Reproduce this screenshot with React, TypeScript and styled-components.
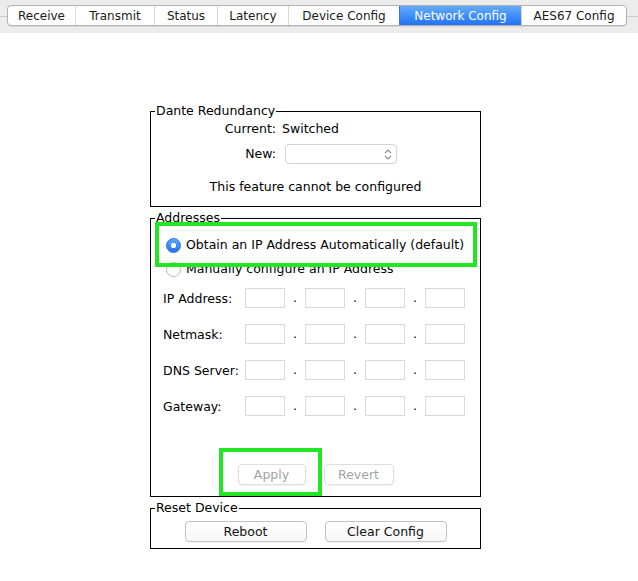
import styled, { createGlobalStyle, css } from "styled-components";

const GlobalStyle = createGlobalStyle`
  html, body {
    margin: 0;
    padding: 0;
    background: #fff;
  }
  body {
    font-family: "Lucida Grande", "DejaVu Sans", sans-serif;
    font-size: 12.5px;
    color: #000;
  }
  * {
    box-sizing: border-box;
  }
`;

const tabs = [
  { label: "Receive", width: 67 },
  { label: "Transmit", width: 79 },
  { label: "Status", width: 63 },
  { label: "Latency", width: 71 },
  { label: "Device Config", width: 111 },
  { label: "Network Config", width: 122, active: true },
  { label: "AES67 Config", width: 105 },
];

const addressRows = ["IP Address:", "Netmask:", "DNS Server:", "Gateway:"];

function App() {
  return (
    <Page>
      <GlobalStyle />
      <Header>
        <TabBar>
          {tabs.map((tab) => (
            <Tab key={tab.label} $width={tab.width} $active={tab.active}>
              {tab.label}
            </Tab>
          ))}
        </TabBar>
      </Header>

      <Main>
        <Group $top={0}>
          <Caption>Dante Redundancy</Caption>
          <StatusGrid>
            <GridLabel>Current:</GridLabel>
            <span>Switched</span>
            <GridLabel>New:</GridLabel>
            <FakeSelect>
              <svg width="8" height="13" viewBox="0 0 8 13">
                <path
                  d="M1 5 L4 2 L7 5 M1 8 L4 11 L7 8"
                  fill="none"
                  stroke="#8a8a8a"
                  strokeWidth="1.1"
                />
              </svg>
            </FakeSelect>
          </StatusGrid>
          <Notice>This feature cannot be configured</Notice>
        </Group>

        <Group $top={3} $bottom={11}>
          <Caption>Addresses</Caption>
          <RadioList>
            <RadioRow>
              <RadioDot $checked />
              Obtain an IP Address Automatically (default)
            </RadioRow>
            <RadioRow>
              <RadioDot />
              Manually configure an IP Address
            </RadioRow>
          </RadioList>
          <AddressList>
            {addressRows.map((label) => (
              <AddressRow key={label}>
                <AddressLabel>{label}</AddressLabel>
                <Octet />
                <Dot>.</Dot>
                <Octet />
                <Dot>.</Dot>
                <Octet />
                <Dot>.</Dot>
                <Octet />
              </AddressRow>
            ))}
          </AddressList>
          <ButtonRow $top={48}>
            <PushButton $width={68} disabled>
              Apply
            </PushButton>
            <PushButton $width={70} disabled>
              Revert
            </PushButton>
          </ButtonRow>
        </Group>

        <Group $top={3} $bottom={6}>
          <Caption>Reset Device</Caption>
          <ButtonRow $top={5}>
            <PushButton $width={122}>Reboot</PushButton>
            <PushButton $width={122}>Clear Config</PushButton>
          </ButtonRow>
        </Group>
      </Main>

      <Highlight $left={155} $top={222} $w={322} $h={45} />
      <Highlight $left={219} $top={448} $w={103} $h={48} />
    </Page>
  );
}

const Page = styled.div`
  position: relative;
  width: 638px;
  height: 581px;
  overflow: hidden;
`;

const Header = styled.header`
  height: 33px;
  padding: 5px 0 0 7px;
  background: linear-gradient(#cacaca, #cacaca) 0 16px / 100% 1px no-repeat,
    #ececec;
`;

const TabBar = styled.nav`
  display: inline-flex;
  height: 21px;
  border: 1px solid #b1b1b1;
  border-radius: 4px;
  overflow: hidden;
  background: #fff;
  box-shadow: 0 1px 1px rgba(0, 0, 0, 0.08);
`;

const Tab = styled.div<{ $width: number; $active?: boolean }>`
  width: ${(p) => p.$width}px;
  font-size: 12px;
  line-height: 20px;
  text-align: center;
  color: #1a1a1a;
  border-left: 1px solid #d6d6d6;

  &:first-child {
    border-left: none;
  }

  ${(p) =>
    p.$active &&
    css`
      color: #fff;
      border-left-color: #2c7cf3;
      background: linear-gradient(#63abfc, #2173f5);
    `}
`;

const Main = styled.main`
  width: 331px;
  margin: 70px 0 0 150px;
`;

const Group = styled.fieldset<{ $top: number; $bottom?: number }>`
  margin: ${(p) => p.$top}px 0 0;
  padding: 0 0 ${(p) => p.$bottom ?? 11}px;
  border: 1px solid #000;
  min-width: 0;
`;

const Caption = styled.legend`
  margin-left: 4px;
  padding: 0 1px;
  line-height: 16px;
`;

const StatusGrid = styled.div`
  display: grid;
  grid-template-columns: 125px auto;
  column-gap: 6px;
  row-gap: 7px;
  align-items: center;
  margin-top: 2px;
  line-height: 16px;
`;

const GridLabel = styled.span`
  text-align: right;
`;

const FakeSelect = styled.div`
  display: flex;
  align-items: center;
  justify-content: flex-end;
  width: 112px;
  height: 20px;
  margin-left: 3px;
  padding-right: 4px;
  border: 1px solid #d2d2d2;
  border-radius: 4px;
  background: #fff;
`;

const Notice = styled.p`
  margin: 15px 0 0;
  line-height: 16px;
  text-align: center;
`;

const RadioList = styled.div`
  display: flex;
  flex-direction: column;
  gap: 8px;
  margin-top: 11px;
  padding-left: 15px;
`;

const RadioRow = styled.label`
  display: flex;
  align-items: center;
  gap: 5px;
  height: 16px;
  line-height: 16px;
`;

const RadioDot = styled.span<{ $checked?: boolean }>`
  flex: none;
  width: 15px;
  height: 15px;
  border-radius: 50%;

  ${(p) =>
    p.$checked
      ? css`
          border: 1px solid #2d71d6;
          background: radial-gradient(circle, #fff 0 2.4px, transparent 3px),
            linear-gradient(#5aa7fb, #2174ef);
        `
      : css`
          border: 1px solid #b8b8b8;
          background: #fff;
        `}
`;

const AddressList = styled.div`
  display: flex;
  flex-direction: column;
  gap: 16px;
  margin-top: 11px;
  padding-left: 12px;
`;

const AddressRow = styled.div`
  display: flex;
  align-items: center;
  height: 20px;
`;

const AddressLabel = styled.span`
  width: 82px;
`;

const Octet = styled.div`
  width: 40px;
  height: 20px;
  border: 1px solid #d9d9d9;
  background: #fff;
`;

const Dot = styled.span`
  width: 20px;
  text-align: center;
  line-height: 20px;
`;

const ButtonRow = styled.div<{ $top: number }>`
  display: flex;
  justify-content: center;
  gap: 18px;
  margin-top: ${(p) => p.$top}px;
`;

const PushButton = styled.button<{ $width: number }>`
  width: ${(p) => p.$width}px;
  height: 21px;
  padding: 0;
  font: inherit;
  color: #111;
  border: 1px solid #c3c3c3;
  border-radius: 4px;
  background: linear-gradient(#ffffff, #f6f6f6);
  box-shadow: 0 1px 0 rgba(0, 0, 0, 0.04);

  &:disabled {
    color: #a2a2a2;
    border-color: #dddddd;
    background: #fff;
  }
`;

const Highlight = styled.div<{ $left: number; $top: number; $w: number; $h: number }>`
  position: absolute;
  left: ${(p) => p.$left}px;
  top: ${(p) => p.$top}px;
  width: ${(p) => p.$w}px;
  height: ${(p) => p.$h}px;
  border: 4px solid #22e622;
  pointer-events: none;
`;

export default App;
